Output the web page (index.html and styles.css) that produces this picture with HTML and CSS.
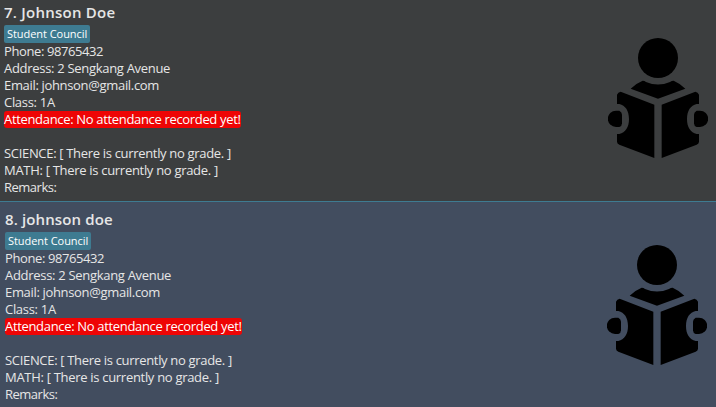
FILE: index.html
```html
<!DOCTYPE html>
<html lang="en">
<head>
<meta charset="utf-8">
<title>Students</title>
<link rel="stylesheet" href="styles.css">
</head>
<body>
<svg width="0" height="0" class="defs">
  <symbol id="reader" viewBox="36 24 300 360">
    <circle cx="186" cy="84" r="60"/>
    <path d="M104 176Q120 160 140 152Q146 152 150 156Q186 171 222 156Q227 152 233 152Q252 160 268 176L186 206Z"/>
    <path d="M63 222V194Q66 186 74 185L175 224V384L70 344Q63 341 63 335V312H70C88 308 99 292 99 267S88 226 70 222Z"/>
    <path d="M309 222V194Q306 186 298 185L197 224V384L302 344Q309 341 309 335V312H302C284 308 273 292 273 267S284 226 302 222Z"/>
    <path d="M60 242H70Q78 246 78 254V280Q78 288 70 291H60A24.500 24.500 0 0 1 60 242Z"/>
    <path d="M312 242H302Q294 246 294 254V280Q294 288 302 291H312A24.500 24.500 0 0 0 312 242Z"/>
  </symbol>
</svg>
<main class="list">
  <article class="card">
    <div class="info">
      <h2>7. Johnson Doe</h2>
      <span class="tag">Student Council</span>
      <p class="phone">Phone: 98765432</p>
      <p class="address">Address: 2 Sengkang Avenue</p>
      <p class="email">Email: johnson@gmail.com</p>
      <p class="class">Class: 1A</p>
      <p class="attendance">Attendance: No attendance recorded yet!</p>
      <p class="grade science">SCIENCE: [ There is currently no grade. ]</p>
      <p class="math">MATH: [ There is currently no grade. ]</p>
      <p class="remarks">Remarks:</p>
    </div>
    <svg class="reader"><use href="#reader"/></svg>
  </article>
  <article class="card selected">
    <div class="info">
      <h2>8. johnson doe</h2>
      <span class="tag">Student Council</span>
      <p class="phone">Phone: 98765432</p>
      <p class="address">Address: 2 Sengkang Avenue</p>
      <p class="email">Email: johnson@gmail.com</p>
      <p class="class">Class: 1A</p>
      <p class="attendance">Attendance: No attendance recorded yet!</p>
      <p class="grade science">SCIENCE: [ There is currently no grade. ]</p>
      <p class="math">MATH: [ There is currently no grade. ]</p>
      <p class="remarks">Remarks:</p>
    </div>
    <svg class="reader"><use href="#reader"/></svg>
  </article>
</main>
</body>
</html>
```
FILE: styles.css
```css
* { box-sizing: border-box; }
body {
  margin: 0;
  overflow: hidden;
  background: #3c3e3f;
  color: #e6e6e6;
  font: 13px/17px "Open Sans", "Noto Sans", sans-serif;
}
.defs { display: block; }
svg { display: block; flex: none; }
.list { height: 407px; overflow: hidden; }
.card {
  display: flex;
  justify-content: space-between;
  height: 201px;
  padding: 0 8px 0 4px;
}
.card.selected {
  height: 206px;
  padding: 5px 9px 0 5px;
  border-top: 1px solid #3e7b91;
  background: #424d5f;
}
.info {
  display: flex;
  flex-direction: column;
  align-items: flex-start;
  white-space: pre;
}
h2 {
  margin: 0;
  height: 25px;
  font-size: 15px;
  line-height: 25px;
  font-weight: 600;
  letter-spacing: 0.24px;
}
.selected h2 { letter-spacing: 0.12px; }
.tag {
  width: 86px;
  height: 18px;
  padding-left: 3px;
  border-radius: 2px;
  background: #3e7b91;
  color: #fff;
  font-size: 11px;
  line-height: 18px;
  letter-spacing: -0.05px;
}
p { margin: 0; height: 17px; letter-spacing: -0.3px; }
.phone { letter-spacing: -0.4px; }
.email, .attendance { letter-spacing: -0.33px; }
.science { letter-spacing: -0.32px; }
.remarks { letter-spacing: -0.5px; }
.attendance {
  width: 237px;
  border-radius: 3px;
  background: #ee0505;
  color: #fff;
}
.grade { margin-top: 17px; }
.reader {
  width: 100px;
  height: 120px;
  margin-top: 38px;
  fill: #000;
}
```
